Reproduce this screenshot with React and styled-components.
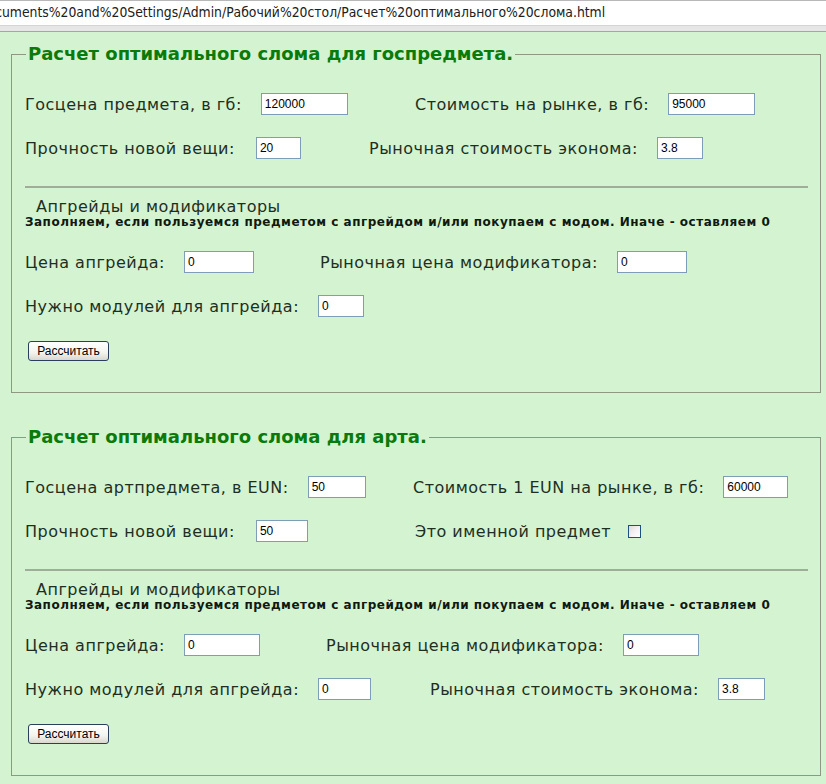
import React from 'react';
import styled, { createGlobalStyle } from 'styled-components';

const GlobalStyle = createGlobalStyle`
  html, body {
    margin: 0;
    padding: 0;
    background: #d3f3d1;
  }
  body {
    font-family: "DejaVu Sans", Verdana, sans-serif;
    color: #1f2f1f;
  }
`;

const AddressBar = styled.div`
  height: 24px;
  background: #ffffff;
  border-top: 1px solid #b8b8b8;
  overflow: hidden;
  white-space: nowrap;
  font-family: "DejaVu Sans Condensed", "DejaVu Sans", sans-serif;
  font-size: 13.8px;
  line-height: 22px;
  color: #202020;
`;

const AddressText = styled.span`
  display: inline-block;
  margin-left: -22px;
`;

const BarEdge = styled.div`
  height: 5px;
  background: #e6e6e6;
  border-top: 1px solid #d4d4d4;
  border-bottom: 1px solid #a6a6a6;
`;

const Page = styled.div`
  padding: 12px 4px 20px 11px;
  display: flex;
  flex-direction: column;
  gap: 34px;
`;

const Box = styled.fieldset`
  margin: 0;
  width: 810px;
  box-sizing: border-box;
  border: 1px solid #8c9a84;
  padding: 29px 12px 31px 13px;
`;

const Legend = styled.legend`
  margin-left: 1px;
  padding: 0 2px;
  font-size: 18px;
  line-height: 20px;
  font-weight: bold;
  color: #0b7a0b;
`;

const Row = styled.div`
  display: flex;
  align-items: center;
  height: 22px;
  margin-bottom: 22px;
`;

const Pair = styled.div`
  display: flex;
  align-items: center;
  width: ${(p) => (p.$w ? `${p.$w}px` : 'auto')};
  flex: none;
`;

const Label = styled.span`
  font-size: 16px;
  letter-spacing: 0.5px;
  white-space: nowrap;
  margin-right: ${(p) => (p.$gap ? p.$gap : 19)}px;
`;

const Input = styled.input`
  box-sizing: border-box;
  width: ${(p) => p.$w}px;
  height: 22px;
  border: 1px solid #7f9db9;
  background: #ffffff;
  padding: 1px 3px;
  font-family: "Liberation Sans", Arial, sans-serif;
  font-size: 12px;
  color: #000;
  outline: none;
`;

const Check = styled.span`
  display: inline-block;
  width: 13px;
  height: 13px;
  box-sizing: border-box;
  border: 1px solid #1c5180;
  background: linear-gradient(135deg, #dcdcd6 0%, #f6f0f4 50%, #ffffff 100%);
`;

/* margin-top collapses with the row's 22px bottom margin */
const Divider = styled.hr`
  margin: 27px 0 0;
  border: none;
  border-top: 2px solid #a0ad99;
`;

const SubTitle = styled.div`
  margin-top: 10px;
  padding-left: 11px;
  font-size: 16px;
  letter-spacing: 0.5px;
  line-height: 17px;
`;

const Note = styled.div`
  font-size: 12px;
  font-weight: bold;
  letter-spacing: 0.5px;
  line-height: 14px;
  color: #101810;
  margin-bottom: 22px;
`;

const CalcButton = styled.button`
  display: block;
  margin: 24px 0 0 3px;
  width: 81px;
  height: 20px;
  padding: 0;
  border: 1px solid #2b3f5c;
  border-radius: 3px;
  background: linear-gradient(#ffffff 0%, #f3f3ee 60%, #d8d8cf 100%);
  font-family: "Liberation Sans", Arial, sans-serif;
  font-size: 12px;
  color: #000;
`;

const UpgradeBlock = ({ rows }) => (
  <>
    <Divider />
    <SubTitle>Апгрейды и модификаторы</SubTitle>
    <Note>Заполняем, если пользуемся предметом с апгрейдом и/или покупаем с модом. Иначе - оставляем 0</Note>
    {rows}
    <CalcButton>Рассчитать</CalcButton>
  </>
);

export default function App() {
  return (
    <>
      <GlobalStyle />
      <AddressBar>
        <AddressText>Documents%20and%20Settings/Admin/Рабочий%20стол/Расчет%20оптимального%20слома.html</AddressText>
      </AddressBar>
      <BarEdge />
      <Page>
        <Box>
          <Legend>Расчет оптимального слома для госпредмета.</Legend>
          <Row>
            <Pair $w={390}>
              <Label>Госцена предмета, в гб:</Label>
              <Input $w={87} defaultValue="120000" />
            </Pair>
            <Pair>
              <Label>Стоимость на рынке, в гб:</Label>
              <Input $w={87} defaultValue="95000" />
            </Pair>
          </Row>
          <Row>
            <Pair $w={344}>
              <Label $gap={21}>Прочность новой вещи:</Label>
              <Input $w={45} defaultValue="20" />
            </Pair>
            <Pair>
              <Label>Рыночная стоимость эконома:</Label>
              <Input $w={46} defaultValue="3.8" />
            </Pair>
          </Row>
          <UpgradeBlock
            rows={
              <>
                <Row>
                  <Pair $w={295}>
                    <Label>Цена апгрейда:</Label>
                    <Input $w={70} defaultValue="0" />
                  </Pair>
                  <Pair>
                    <Label>Рыночная цена модификатора:</Label>
                    <Input $w={70} defaultValue="0" />
                  </Pair>
                </Row>
                <Row>
                  <Pair>
                    <Label>Нужно модулей для апгрейда:</Label>
                    <Input $w={46} defaultValue="0" />
                  </Pair>
                </Row>
              </>
            }
          />
        </Box>
        <Box>
          <Legend>Расчет оптимального слома для арта.</Legend>
          <Row>
            <Pair $w={388}>
              <Label>Госцена артпредмета, в EUN:</Label>
              <Input $w={58} defaultValue="50" />
            </Pair>
            <Pair>
              <Label>Стоимость 1 EUN на рынке, в гб:</Label>
              <Input $w={65} defaultValue="60000" />
            </Pair>
          </Row>
          <Row>
            <Pair $w={390}>
              <Label $gap={21}>Прочность новой вещи:</Label>
              <Input $w={52} defaultValue="50" />
            </Pair>
            <Pair>
              <Label $gap={17}>Это именной предмет</Label>
              <Check />
            </Pair>
          </Row>
          <UpgradeBlock
            rows={
              <>
                <Row>
                  <Pair $w={301}>
                    <Label>Цена апгрейда:</Label>
                    <Input $w={76} defaultValue="0" />
                  </Pair>
                  <Pair>
                    <Label>Рыночная цена модификатора:</Label>
                    <Input $w={76} defaultValue="0" />
                  </Pair>
                </Row>
                <Row>
                  <Pair $w={405}>
                    <Label>Нужно модулей для апгрейда:</Label>
                    <Input $w={53} defaultValue="0" />
                  </Pair>
                  <Pair>
                    <Label>Рыночная стоимость эконома:</Label>
                    <Input $w={47} defaultValue="3.8" />
                  </Pair>
                </Row>
              </>
            }
          />
        </Box>
      </Page>
    </>
  );
}
